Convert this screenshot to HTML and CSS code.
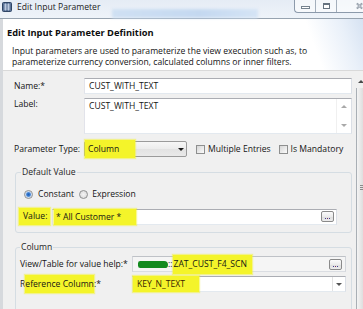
FILE: index.html
```html
<!DOCTYPE html>
<html lang="en">
<head>
<meta charset="utf-8">
<title>Edit Input Parameter</title>
<link rel="stylesheet" href="styles.css">
</head>
<body>
<div class="window">
  <div class="titlebar">
    <div class="aero-blur"></div>
    <svg class="app-icon" width="10" height="10" viewBox="0 0 10 10">
      <rect x="0.5" y="0.5" width="9" height="9" rx="1" fill="#5b7397" stroke="#2f4566"/>
      <path d="M2 3h6M2 5h6M2 7h6M3.5 1.5v7M6.5 1.5v7" stroke="#c9d6ea" stroke-width="0.8"/>
    </svg>
    <span class="title">Edit Input Parameter</span>
    <div class="win-buttons">
      <span class="wb wb-min"><i></i></span>
      <span class="wb wb-max"><i></i></span>
      <span class="wb wb-close"><svg width="8" height="8" viewBox="0 0 8 8"><path d="M1 1L7 7M7 1L1 7" stroke="#7d8896" stroke-width="2.2"/><path d="M1 1L7 7M7 1L1 7" stroke="#f4f6f9" stroke-width="0.8"/></svg></span>
    </div>
  </div>
  <div class="main">
    <div class="banner">
      <div class="banner-title">Edit Input Parameter Definition</div>
      <div class="banner-desc">Input parameters are used to parameterize the view execution such as, to<br>parameterize currency conversion, calculated columns or inner filters.</div>
    </div>
    <div class="pane">
      <div class="form">
        <div class="row row-name">
          <span class="lbl">Name:*</span>
          <div class="field">CUST_WITH_TEXT</div>
        </div>
        <div class="row row-label">
          <span class="lbl">Label:</span>
          <div class="field area">
            <span class="area-text">CUST_WITH_TEXT</span>
            <span class="area-scroll"><i class="tri tri-up"></i><i class="tri tri-down"></i></span>
          </div>
        </div>
        <div class="row row-type">
          <span class="lbl">Parameter Type:</span>
          <div class="type-line">
            <div class="combo-ro"><span class="hl hl-combo">Column</span><i class="drop"></i></div>
            <span class="check"><i class="box"></i>Multiple Entries</span>
            <span class="check check-2"><i class="box"></i>Is Mandatory</span>
          </div>
        </div>
        <fieldset class="group group-default">
          <legend>Default Value</legend>
          <div class="radios">
            <span class="radio"><i class="dot on"></i>Constant</span>
            <span class="radio radio-2"><i class="dot"></i>Expression</span>
          </div>
          <div class="value-row">
            <span class="hl hl-label">Value:</span>
            <div class="field value-field"><span class="hl hl-value">* All Customer *</span><span class="dots-btn"><i></i><i></i><i></i></span></div>
          </div>
        </fieldset>
        <fieldset class="group group-column">
          <legend>Column</legend>
          <div class="col-row">
            <span class="lbl">View/Table for value help:*</span>
            <div class="field readonly"><span class="redact"></span><span class="colons">::</span><span class="hl hl-zat">ZAT_CUST_F4_SCN</span><span class="dots-btn"><i></i><i></i><i></i></span></div>
          </div>
          <div class="col-row">
            <span class="lbl">R<span class="hl hl-ref">eference Column</span>:*</span>
            <div class="field combo-edit"><span class="hl hl-key">KEY_N_TEXT</span><span class="drop-area"><i class="drop drop-grey"></i></span></div>
          </div>
        </fieldset>
      </div>
      <div class="vscroll">
        <div class="vs-up"><i class="tri tri-up dark"></i></div>
        <div class="vs-thumb"><i class="grip"></i></div>
      </div>
    </div>
  </div>
</div>
</body>
</html>
```

FILE: styles.css
```css
* { box-sizing: border-box; margin: 0; padding: 0; }
html, body { width: 363px; height: 309px; overflow: hidden; }
body {
  font-family: "Open Sans", "Noto Sans", "Liberation Sans", sans-serif;
  font-size: 8.6px;
  color: #141414;
  background: #f0f0f0;
}
i { display: block; font-style: normal; }

.window { display: flex; flex-direction: column; height: 309px; }

/* title bar */
.titlebar {
  position: relative;
  flex: none;
  height: 19px;
  display: flex;
  align-items: flex-start;
  background: linear-gradient(180deg, #e5ecf5, #eef3f9);
  border-bottom: 1px solid #97a3b0;
}
.aero-blur {
  position: absolute;
  left: 112px;
  top: 9px;
  width: 146px;
  height: 9px;
  background: linear-gradient(90deg, #cfe0f3, #c4d8f0 60%, #d5e4f5);
  filter: blur(1.5px);
}
.app-icon { position: relative; flex: none; margin: 2px 5px 0 2px; }
.title { position: relative; line-height: 15px; color: #1c1c1c; }
.win-buttons {
  position: relative;
  margin-left: auto;
  display: flex;
  height: 13px;
  border: 1px solid #8c9aab;
  border-top: 0;
  border-right: 0;
  border-radius: 0 0 0 4px;
  background: rgba(255, 255, 255, 0.6);
}
.wb { display: flex; align-items: center; height: 12px; }
.wb-min { width: 20px; justify-content: center; }
.wb-max { width: 21px; justify-content: center; border-left: 1px solid #a4afbc; }
.wb-close { width: 27px; border-left: 1px solid #a4afbc; padding-left: 19px; }
.wb-min i { width: 9px; height: 3px; border: 1px solid #76838f; margin-top: 3px; background: #fff; }
.wb-max i { width: 7px; height: 6px; border: 1px solid #66727f; border-top-width: 2px; background: #fff; }

/* main area */
.main {
  flex: 1;
  min-height: 0;
  display: flex;
  flex-direction: column;
  border-left: 3px solid #d6d9dd;
}
.banner {
  flex: none;
  height: 51px;
  padding: 8px 0 0 4px;
  background: linear-gradient(250deg, #d6e2f2 0, #e9f0f9 22px, #ffffff 55px);
}
.banner-title { font-weight: 700; font-size: 9.3px; line-height: 12px; color: #0e0e0e; }
.banner-desc { margin: 7px 0 0 5px; line-height: 11px; }

.pane {
  flex: 1;
  min-height: 0;
  display: flex;
  border-top: 1px solid #d9d9d9;
}
.form { flex: 1; min-width: 0; padding: 7px 3px 0 11px; }

.row { display: grid; grid-template-columns: 70px 1fr; align-items: center; }
.row-label { margin-top: 4px; align-items: start; }
.row-label .lbl { padding-top: 1px; }
.row-type { margin-top: 7px; }
.lbl { line-height: 11px; white-space: nowrap; }

.field {
  height: 16px;
  border: 1px solid;
  border-color: #abadb3 #dbdfe6 #e3e9ef #e2e3ea;
  background: #fff;
  display: flex;
  align-items: center;
  padding: 0 2px 0 4px;
  line-height: 14px;
  white-space: nowrap;
}
.area { height: 36px; align-items: flex-start; padding: 2px 0 0 4px; }
.area-text { flex: 1; line-height: 11px; }
.area-scroll {
  width: 15px;
  align-self: stretch;
  margin-top: -2px;
  border-left: 1px solid #f0f0f0;
  display: flex;
  flex-direction: column;
  justify-content: space-between;
  align-items: center;
  padding: 6px 0;
}
.tri { width: 0; height: 0; border-left: 3px solid transparent; border-right: 3px solid transparent; }
.tri-up { border-bottom: 3px solid #a9a9a9; }
.tri-down { border-top: 3px solid #a9a9a9; }
.tri.dark { border-bottom-color: #4a4a4a; }

.hl { background: #f4f42a; box-shadow: 0 0 1px 1px rgba(244, 244, 42, 0.5); }

/* parameter type line */
.type-line { display: flex; align-items: center; }
.combo-ro {
  width: 103px;
  height: 16px;
  border: 1px solid #9a9a9a;
  border-radius: 2px;
  background: linear-gradient(#f6f6f6, #ececec 50%, #e2e2e2 51%, #e9e9e9);
  display: flex;
  align-items: center;
  padding: 0 2px 0 0;
}
.hl-combo { display: inline-block; width: 50px; line-height: 18px; margin: -2px 0; padding-left: 3px; }
.drop {
  margin-left: auto;
  width: 0; height: 0;
  border-left: 3px solid transparent;
  border-right: 3px solid transparent;
  border-top: 3px solid #1a1a1a;
}
.drop-grey { margin-left: 0; border-top-color: #555; }
.check { display: flex; align-items: center; margin-left: 9px; white-space: nowrap; }
.check-2 { margin-left: 8px; }
.box {
  width: 9px; height: 9px;
  border: 1px solid #8e8f8f;
  background: linear-gradient(135deg, #d6d6d6, #fbfbfb);
  margin-right: 3px;
}

/* group boxes */
.group { border: 1px solid #d5dde3; border-radius: 3px; margin-left: 1px; min-width: 0; }
.group legend { line-height: 11px; padding: 0 1px; color: #1e1e1e; }
.group-default { margin-top: 10px; padding: 10px 14px 7px 3px; }
.group-default legend { margin-left: 2px; }
.radios { display: flex; align-items: center; height: 12px; padding-left: 5px; }
.radio { display: flex; align-items: center; }
.radio-2 { margin-left: 5px; }
.dot {
  width: 9px; height: 9px;
  border-radius: 50%;
  border: 1px solid #8e8f8f;
  background: radial-gradient(circle, #f4f4f4, #d6d6d6);
  margin-right: 5px;
}
.dot.on { background: radial-gradient(circle, #1f5fb8 0, #3c7fd2 1.8px, #a9c6ea 2.6px, #eef3f9 3.5px); }
.radio-2 .dot { margin-right: 4px; }

.value-row { display: flex; align-items: center; margin-top: 8px; }
.hl-label { width: 31px; padding-left: 4px; line-height: 17px; margin-right: 2px; }
.value-field { flex: 1; padding: 0 2px 0 1px; }
.hl-value { display: inline-block; width: 82px; padding-left: 2px; line-height: 16px; margin: -1px 0; }
.dots-btn {
  margin-left: auto;
  width: 13px;
  height: 11px;
  border: 1px solid #8a8a8a;
  border-radius: 2px;
  background: linear-gradient(#fbfbfb, #ececec 50%, #dcdcdc 51%, #ededed);
  display: flex;
  align-items: flex-end;
  justify-content: center;
  gap: 1px;
  padding-bottom: 2px;
}
.dots-btn i { width: 1px; height: 1px; background: #3d3d8f; }
.dots-btn i:nth-child(2) { background: #7a2d5a; }

.group-column { margin-top: 9px; padding: 3px 5px 30px 4px; }
.col-row { display: grid; grid-template-columns: 112px 1fr; align-items: center; }
.col-row + .col-row { margin-top: 4px; }
.readonly { background: #f5f5f5; border-color: #bfc2c7 #d3d6db #dadde2 #d3d6db; padding-right: 3px; }
.redact {
  display: inline-block;
  width: 30px;
  height: 7px;
  margin-left: 1px;
  background: #138a1f;
  border-radius: 3px 5px 4px 3px;
  filter: blur(0.4px);
}
.hl-zat { display: inline-block; width: 79px; padding-left: 1px; line-height: 19px; margin: -3px 0; }
.combo-edit { padding: 0; }
.hl-key { display: inline-block; width: 66px; padding-left: 4px; line-height: 16px; margin: -1px 0; color: #3a1f00; }
.drop-area {
  margin-left: auto;
  width: 13px;
  align-self: stretch;
  border-left: 1px solid #e2e2e2;
  display: flex;
  align-items: center;
  justify-content: center;
}
.hl-ref { padding: 3px 0; }

/* right scrollbar */
.vscroll { width: 8px; flex: none; display: flex; flex-direction: column; padding-top: 4px; }
.vs-up { height: 13px; display: flex; align-items: center; justify-content: center; padding-left: 3px; }
.vs-thumb {
  flex: 1;
  margin-left: 1px;
  border-left: 1px solid #a9afb5;
  background: linear-gradient(90deg, #f4f4f4, #dedede);
  padding: 97px 0 0 3px;
}
.grip {
  width: 4px;
  height: 5px;
  background: repeating-linear-gradient(180deg, #8a8a8a 0 1px, transparent 1px 2px);
}
```
